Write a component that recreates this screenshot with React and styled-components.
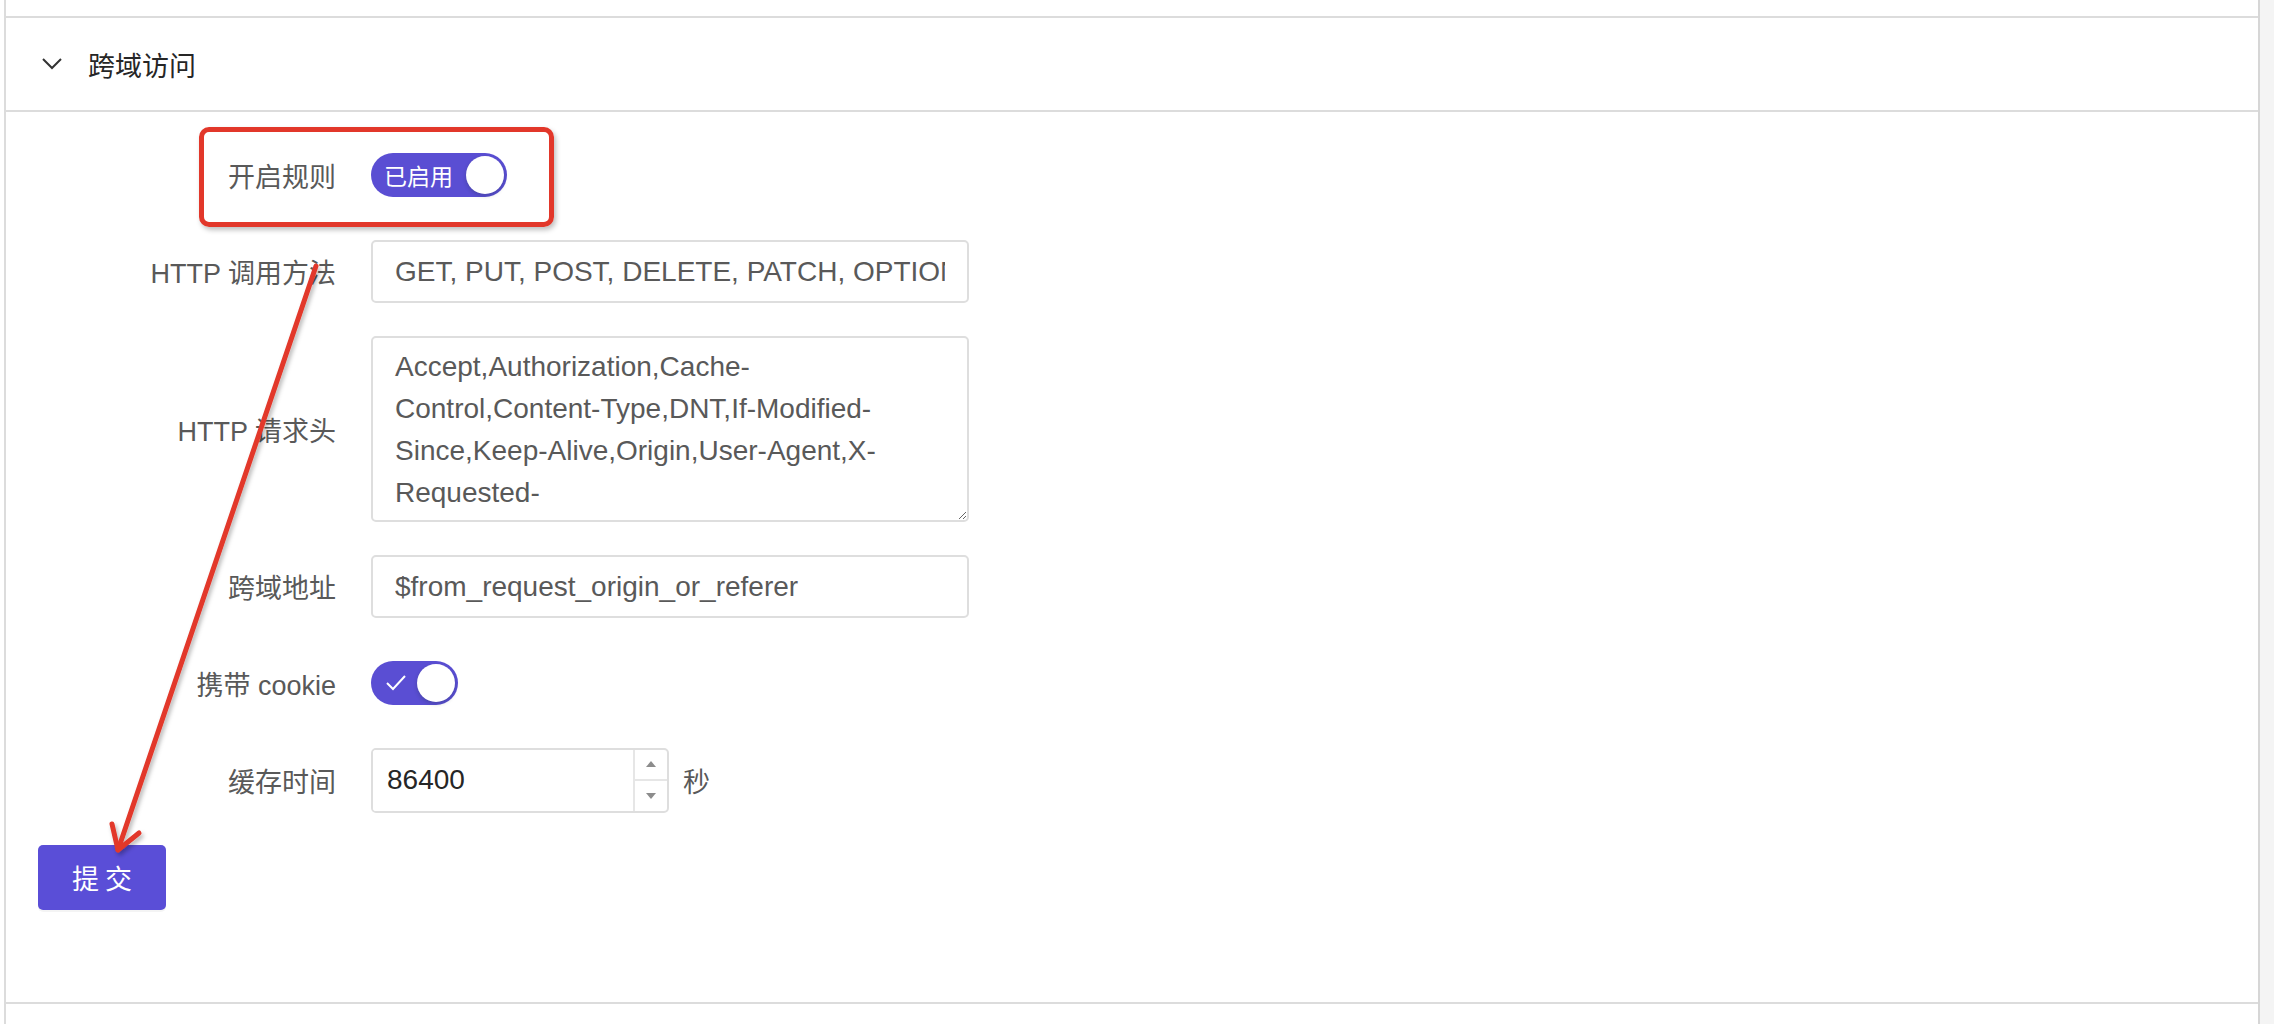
import React from 'react'
import styled, { createGlobalStyle } from 'styled-components'

const GlobalStyle = createGlobalStyle`
    html, body {
        margin: 0;
        padding: 0;
        background: #fff;
    }
    body {
        font-family: "Liberation Sans", "Noto Sans CJK SC", sans-serif;
        color: #262626;
    }
`

const methods = 'GET, PUT, POST, DELETE, PATCH, OPTIONS'
const headers =
    'Accept,Authorization,Cache-Control,Content-Type,DNT,If-Modified-Since,Keep-Alive,Origin,User-Agent,X-Requested-With,Range,Authorization,Content-Language'

function Chevron() {
    return (
        <svg width="22" height="14" viewBox="0 0 22 14">
            <path d="M2 2 L11 11 L20 2" fill="none" stroke="#333" strokeWidth="2" />
        </svg>
    )
}

function Check() {
    return (
        <svg width="22" height="18" viewBox="0 0 22 18">
            <path d="M2 9 L8 15 L20 2" fill="none" stroke="#fff" strokeWidth="2" />
        </svg>
    )
}

function Caret({ up }) {
    return (
        <svg width="12" height="8" viewBox="0 0 12 8">
            <path d={up ? 'M1 7 L6 1 L11 7 Z' : 'M1 1 L6 7 L11 1 Z'} fill="#8c8c8c" />
        </svg>
    )
}

function FormItem({ label, children }) {
    return (
        <Row>
            <Label>{label}</Label>
            <Control>{children}</Control>
        </Row>
    )
}

function App() {
    return (
        <Page>
            <GlobalStyle />
            <Main>
                <Collapse>
                    <PrevItem />
                    <Header>
                        <Chevron />
                        <Title>跨域访问</Title>
                    </Header>
                    <Content>
                        <Form>
                            <FormItem label="开启规则">
                                <Switch wide>
                                    <SwitchText>已启用</SwitchText>
                                    <Knob />
                                </Switch>
                            </FormItem>
                            <FormItem label="HTTP 调用方法">
                                <Input readOnly defaultValue={methods} />
                            </FormItem>
                            <FormItem label="HTTP 请求头">
                                <TextArea readOnly defaultValue={headers} />
                            </FormItem>
                            <FormItem label="跨域地址">
                                <Input readOnly defaultValue="$from_request_origin_or_referer" />
                            </FormItem>
                            <FormItem label="携带 cookie">
                                <Switch>
                                    <CheckMark><Check /></CheckMark>
                                    <Knob />
                                </Switch>
                            </FormItem>
                            <FormItem label="缓存时间">
                                <NumberBox>
                                    <NumberInput readOnly defaultValue="86400" />
                                    <Stepper>
                                        <Step><Caret up /></Step>
                                        <Step><Caret /></Step>
                                    </Stepper>
                                </NumberBox>
                                <Unit>秒</Unit>
                            </FormItem>
                        </Form>
                        <Footer>
                            <SubmitButton>提 交</SubmitButton>
                        </Footer>
                    </Content>
                    <NextItem />

                    <Highlight />
                    <Annotation width="600" height="900" viewBox="0 0 600 900">
                        <defs>
                            <filter id="arrowShadow" x="-20%" y="-20%" width="140%" height="140%">
                                <feDropShadow dx="2" dy="3" stdDeviation="2" floodColor="#000" floodOpacity="0.28" />
                            </filter>
                        </defs>
                        <g filter="url(#arrowShadow)" stroke="#e2372a" strokeWidth="5" strokeLinecap="round" strokeLinejoin="round" fill="none">
                            <path d="M310 266 L112 850" />
                            <path d="M106 824 L112 850 L133 833" />
                        </g>
                    </Annotation>
                </Collapse>
            </Main>
            <Track />
        </Page>
    )
}

export default App

const Page = styled.div`
    display: flex;
    width: 2274px;
    height: 1024px;
    overflow: hidden;
`
const Main = styled.div`
    flex: 1;
    padding-left: 4px;
    display: flex;
`
const Track = styled.div`
    width: 14px;
    background: #f4f4f4;
`
const Collapse = styled.div`
    position: relative;
    flex: 1;
    display: flex;
    flex-direction: column;
    border-left: 2px solid #dcdcdc;
    border-right: 2px solid #d6d6d6;
    background: #fff;
`
const PrevItem = styled.div`
    height: 16px;
    border-bottom: 2px solid #dcdcdc;
`
const Header = styled.div`
    height: 92px;
    display: flex;
    align-items: center;
    gap: 25px;
    padding-left: 35px;
    border-bottom: 2px solid #dcdcdc;
`
const Title = styled.span`
    font-size: 27px;
    color: #262626;
    font-family: "Noto Sans CJK SC", sans-serif;
`
const Content = styled.div`
    height: 892px;
    box-sizing: border-box;
    padding-top: 31px;
    border-bottom: 2px solid #dcdcdc;
`
const NextItem = styled.div`
    flex: 1;
`
const Form = styled.div`
    display: flex;
    flex-direction: column;
    gap: 32.5px;
`
const Row = styled.div`
    display: grid;
    grid-template-columns: 330px 598px;
    column-gap: 35px;
    align-items: center;
    min-height: 64px;
`
const Label = styled.label`
    text-align: right;
    font-size: 27px;
    color: #595959;
    white-space: nowrap;
`
const Control = styled.div`
    display: flex;
    align-items: center;
    gap: 14px;
`
const Switch = styled.div`
    display: flex;
    align-items: center;
    justify-content: space-between;
    box-sizing: border-box;
    width: ${p => (p.wide ? '136px' : '87px')};
    height: 44px;
    padding: 0 3px 0 ${p => (p.wide ? '13px' : '14px')};
    border-radius: 22px;
    background: #5a4ed3;
`
const SwitchText = styled.span`
    color: #fff;
    font-size: 23px;
    font-family: "Noto Sans CJK SC", sans-serif;
`
const CheckMark = styled.span`
    display: flex;
    align-items: center;
`
const Knob = styled.span`
    width: 38px;
    height: 38px;
    border-radius: 50%;
    background: #fff;
    box-shadow: 0 2px 4px rgba(0, 35, 11, 0.2);
`
const Input = styled.input`
    box-sizing: border-box;
    width: 598px;
    height: 63px;
    padding: 0 22px;
    border: 2px solid #dedede;
    border-radius: 5px;
    font-family: "Liberation Sans", "Noto Sans CJK SC", sans-serif;
    font-size: 28px;
    color: #595959;
    outline: none;
`
const TextArea = styled.textarea`
    box-sizing: border-box;
    width: 598px;
    height: 186px;
    padding: 8px 22px;
    border: 2px solid #dedede;
    border-radius: 5px;
    font-family: "Liberation Sans", "Noto Sans CJK SC", sans-serif;
    font-size: 28px;
    line-height: 42px;
    color: #595959;
    overflow: hidden;
    outline: none;
`
const NumberBox = styled.div`
    display: flex;
    box-sizing: border-box;
    width: 298px;
    height: 65px;
    border: 2px solid #dedede;
    border-radius: 5px;
    overflow: hidden;
`
const NumberInput = styled.input`
    flex: 1;
    min-width: 0;
    border: none;
    padding: 0 14px;
    font-family: "Liberation Sans", sans-serif;
    font-size: 28px;
    color: #262626;
    outline: none;
`
const Stepper = styled.div`
    width: 32px;
    display: flex;
    flex-direction: column;
    border-left: 2px solid #e6e6e6;
`
const Step = styled.div`
    flex: 1;
    display: flex;
    align-items: center;
    justify-content: center;
    & + & {
        border-top: 2px solid #e6e6e6;
    }
`
const Unit = styled.span`
    font-size: 27px;
    color: #595959;
    font-family: "Noto Sans CJK SC", sans-serif;
`
const Footer = styled.div`
    padding: 32px 0 0 32px;
`
const SubmitButton = styled.button`
    height: 65px;
    padding: 0 34px;
    border: none;
    border-radius: 5px;
    background: #5a4ed7;
    color: #fff;
    font-size: 27px;
    font-family: "Noto Sans CJK SC", sans-serif;
    box-shadow: 0 2px 0 rgba(0, 0, 0, 0.045);
`
const Highlight = styled.div`
    position: absolute;
    left: 193px;
    top: 127px;
    width: 355px;
    height: 100px;
    box-sizing: border-box;
    border: 5px solid #e2372a;
    border-radius: 10px;
    box-shadow: 2px 3px 5px rgba(0, 0, 0, 0.25);
    pointer-events: none;
`
const Annotation = styled.svg`
    position: absolute;
    left: 0;
    top: 0;
    pointer-events: none;
`
